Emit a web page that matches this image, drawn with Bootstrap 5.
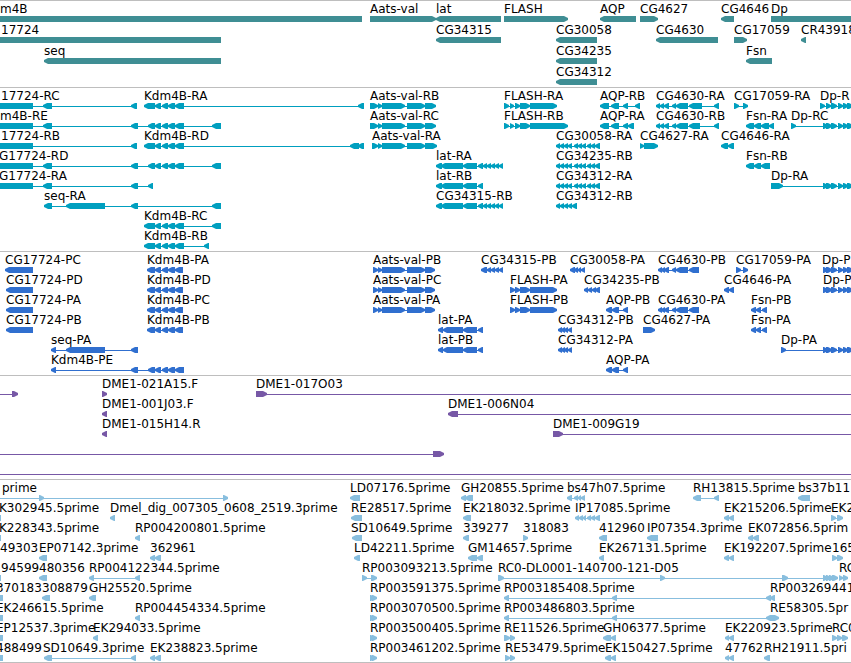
<!DOCTYPE html>
<html lang="en">
<head>
<meta charset="utf-8">
<meta name="viewport" content="width=device-width, initial-scale=1">
<title>Genome region map</title>
<link href="https://cdn.jsdelivr.net/npm/bootstrap@5.3.0/dist/css/bootstrap.min.css" rel="stylesheet">
<style>
  body { font-family: "DejaVu Sans", sans-serif; font-size: 12px; line-height: 14px; color: #000; }
  .gene-track { border-top: 1px solid #bebebe; padding: 1px 0 2px; }
  .gene-track:last-child { border-bottom: 1px solid #bebebe; padding-bottom: 1px; }
  .track-genes { color: #3f8e94; gap: 1px; }
  .track-transcripts { color: #009fbf; }
  .track-proteins { color: #306fcf; }
  .track-clones { color: #7758a6; }
  .track-ests { color: #88bede; }
  .label-line { height: 14px; color: #000; }
  .feature-label { position: absolute; top: 0; white-space: pre; }
  .feature-line { height: 6px; fill: currentColor; }
</style>
</head>
<body class="bg-white">
<main id="map" class="overflow-hidden"></main>
<script src="https://cdn.jsdelivr.net/npm/bootstrap@5.3.0/dist/js/bootstrap.bundle.min.js"></script>
<script>
// Width of the mapped region, in map units.
const SPAN = 851;

// Exon groups shared by several transcripts.
const G = {
  kdm: "144-155 155-161 162-168 168-175 175-184",
  kdmIn: "148-155 155-161 162-168 168-175 175-184",
  kdmP: "147-155 155-161 162-168 168-175 175-183",
  aats: "370-378 378-382 382-405 407-425 425-436",
  aatsP: "373-378 378-382 382-405 407-425 425-435",
  flash: "504-509 510-514 515-520 520-530",
  latEnd: "483-487 487-491 491-495 495-499 499-503",
  lat: "436-442 441-463 463-477 478-483",
  latP: "438-443 443-463 463-477 478-483",
  cg3: "556-560 560-564 564-568 568-572 574-578 578-582 582-586 587-591 591-595 595-600",
  cg46: "656-660 660-664 664-669 672-676 676-688",
  cg46P: "658-662 661-665 664-669 672-676 676-688 689-699",
  dp: "823-828 826-832 831-837 838-843 843-848 847-853 852-858"
};

// Feature: label | label position | direction | exons | optional connector extent
const tracks = [
  ["genes", "Genes", [
    ["m4B|0|<|-20-362", "Aats-val|370|>|370-436", "lat|436|<|436-501", "FLASH|504|>|504-568", "AQP|600|<|600-636", "CG4627|640|>|640-658", "CG4646|721|<|721-734", "Dp|771|>|771-900"],
    ["17724|1|<|-20-221", "CG34315|436|<|436-501", "CG30058|556|<|556-597", "CG4630|656|<|656-718", "CG17059|734|>|734-747", "CR43918|801|<|801-806"],
    ["seq|44|<|44-221", "CG34235|556|<|556-597", "Fsn|746|<|746-772"],
    ["CG34312|556|<|556-597"]
  ]],
  ["transcripts", "Transcripts", [
    ["17724-RC|1|<|-20-33 43-52 131-137", "Kdm4B-RA|144|<|kdm 358-364", "Aats-val-RB|370|>|aats", "FLASH-RA|504|>|flash 530-557", "AQP-RB|600|<|600-609 611-619 623-628 635-640", "CG4630-RA|656|<|cg46 689-702 714-719", "CG17059-RA|734|>|734-739 743-748", "Dp-R|820|>|820-825 826-831 831-837 838-843 843-848 847-853 852-858"],
    ["m4B-RE|0|<|-20-33 43-52 131-138 kdmIn 212-221", "Aats-val-RC|370|>|aats", "FLASH-RB|504|>|flash 530-568", "AQP-RA|600|<|600-609 611-619 623-628 628-634", "CG4630-RB|656|<|cg46 689-700 714-719", "Fsn-RA|746|<|746-754 754-761 761-769 769-774", "Dp-RC|791|>|791-796 dp"],
    ["17724-RB|1|<|-20-33 131-137", "Kdm4B-RD|144|<|kdm 350-359 358-364", "Aats-val-RA|372|>|372-378 378-382 382-405 407-425 425-437", "CG30058-RA|556|<|cg3", "CG4627-RA|640|>|640-644 644-658", "CG4646-RA|721|<|721-728 728-734"],
    ["G17724-RD|-1|<|-20-33 43-52 131-138 kdmIn 212-221", "lat-RA|436|<|lat latEnd", "CG34235-RB|556|<|cg3", "Fsn-RB|746|<|746-754 754-761 761-770"],
    ["G17724-RA|-1|<|-20-33 43-52 131-138 148-153", "lat-RB|436|<|lat", "CG34312-RA|556|<|cg3", "Dp-RA|771|>|771-783 dp"],
    ["seq-RA|44|<|44-52 66-105 131-138 212-221", "CG34315-RB|436|<|lat latEnd", "CG34312-RB|556|<|556-560 560-564 564-568 568-572 572-577"],
    ["Kdm4B-RC|144|<|kdm 212-221"],
    ["Kdm4B-RB|144|<|kdm 204-209"]
  ]],
  ["proteins", "Proteins", [
    ["CG17724-PC|5|<|5-33", "Kdm4B-PA|147|<|kdmP", "Aats-val-PB|373|>|aatsP", "CG34315-PB|481|<|481-487 487-491 491-495 495-499 499-503", "CG30058-PA|570|<|570-575 574-578 578-581 581-585", "CG4630-PB|658|<|cg46P", "CG17059-PA|736|>|736-741 743-748", "Dp-P|822|>|dp"],
    ["CG17724-PD|6|<|6-33", "Kdm4B-PD|147|<|kdmP", "Aats-val-PC|373|>|aatsP", "FLASH-PA|510|>|510-515 515-520 520-530 530-557", "CG34235-PB|584|<|584-588 588-592 592-596 595-600", "CG4646-PA|724|<|724-729 729-734", "Dp-P|823|>|dp"],
    ["CG17724-PA|6|<|6-33", "Kdm4B-PC|147|<|kdmP", "Aats-val-PA|373|>|aatsP", "FLASH-PB|510|>|510-515 515-520 520-530 530-557", "AQP-PB|606|<|606-612 612-619 623-628", "CG4630-PA|658|<|cg46P", "Fsn-PB|751|<|751-756 756-761 762-767"],
    ["CG17724-PB|6|<|6-33", "Kdm4B-PB|147|<|kdmP", "lat-PA|438|<|latP", "CG34312-PB|558|<|558-562 561-565 564-568 568-572", "CG4627-PA|643|>|643-655", "Fsn-PA|751|<|751-756 756-761 762-767"],
    ["seq-PA|51|<|51-56 66-105 131-138", "lat-PB|438|<|latP", "CG34312-PA|558|<|558-562 561-565 564-568 568-572", "Dp-PA|781|>|781-786 dp"],
    ["Kdm4B-PE|51|<|51-56 131-138 kdmIn", "AQP-PA|606|<|606-612 612-619 623-628"]
  ]],
  ["clones", "Clones", [
    ["|0|>|12-18|-5-18", "DME1-021A15.F|102|>|102-107", "DME1-017O03|256|>|256-267|256-860"],
    ["DME1-001J03.F|102|<|102-107", "DME1-006N04|448|<|448-458|448-860"],
    ["DME1-015H14.R|102|<|102-107", "DME1-009G19|553|>|553-563|553-860"],
    ["|0|>|433-444|-5-444"],
    ["|0|>||-5-860"]
  ]],
  ["ests", "ESTs", [
    ["prime|2|>|39-44 223-228|-5-228", "LD07176.5prime|350|<|350-360", "GH20855.5prime|461|<|461-466 465-473", "bs47h07.5prime|567|<|567-572 574-578 578-581 581-585", "RH13815.5prime|693|<|693-701 714-719", "bs37b11|798|<|798-810"],
    ["K302945.5prime|-1|<|-9-1", "Dmel_dig_007305_0608_2519.3prime|110|<|110-115", "RE28517.5prime|351|<|351-362", "EK218032.5prime|463|<|463-471", "IP17085.5prime|575|<|575-579 579-583 583-586 587-591 591-595 595-600", "EK215206.5prime|724|<|724-729 729-734", "EK2|831|>|831-836 837-843"],
    ["K228343.5prime|-1|<|-9-1", "RP004200801.5prime|135|<|135-140", "SD10649.5prime|351|<|352-362", "339277|463|<|463-469", "318083|523|>|523-528", "412960|599|<|599-607", "IP07354.3prime|647|<|647-658", "EK072856.5prim|748|<|748-753 753-759"],
    ["49303|0|<|", "EP07142.3prime|39|<|39-47", "362961|150|<|150-155 155-161", "LD42211.5prime|354|<|354-360", "GM14657.5prime|468|<|468-477 477-483", "EK267131.5prime|599|<|599-604", "EK192207.5prime|724|<|724-729 729-734", "165|832|>|832-837 837-843"],
    ["94599|1|<|-9-1", "480356|39|<|39-47", "RP004122344.5prime|89|<|89-94 135-140", "RP003093213.5prime|362|>|362-367 371-377", "RC0-DL0001-140700-121-D05|498|>|498-504 660-665 782-788 823-828 826-831 829-834 832-838", "RC|839|>|839-843 843-848"],
    ["370183|-4|<|-9-3", "308879|42|<|42-50", "GH25520.5prime|89|<|89-96", "RP003591375.5prime|370|>|370-375 372-377", "RP003185408.5prime|504|<|504-509 612-617 766-771 770-775", "RP003269441|770|<|"],
    ["EK246615.5prime|-4|<|-9-3", "RP004454334.5prime|135|<|135-140", "RP003070500.5prime|370|>|370-375 372-377", "RP003486803.5prime|504|<|504-509 612-617 766-775", "RE58305.5pr|770|>|771-779"],
    ["EP12537.3prime|-4|<|-9-3", "EK294033.5prime|93|<|93-98", "RP003500405.5prime|370|>|370-375 372-377", "RE11526.5prime|504|>|504-510 510-515", "GH06377.5prime|603|<|603-611 611-616", "EK220923.5prime|725|<|725-729 729-734", "RC0|832|>|832-837 837-842 842-848"],
    ["488499|-4|<|-9-3", "SD10649.3prime|43|<|44-52 131-136", "EK238823.5prime|150|<|150-155 155-161", "RP003461202.5prime|370|>|370-375 372-377", "RE53479.5prime|505|>|505-510 510-515", "EK150427.5prime|605|<|605-611 611-616", "47762|725|<|725-729 729-734", "RH21911.5pri|764|<|764-770"]
  ]]
];

const range = s => s.match(/^(-?\d+)-(\d+)$/).slice(1).map(Number);

// Blunt-tipped arrow: two units high at the tip, six at the body.
function exonShape([a, b], dir) {
  const head = Math.min(4, b - a);
  const pts = dir === "<"
    ? [[a, 2], [a + head, 0], [b, 0], [b, 6], [a + head, 6], [a, 4]]
    : [[a, 0], [b - head, 0], [b, 2], [b, 4], [b - head, 6], [a, 6]];
  return `<polygon points="${pts.map(p => p.join()).join(" ")}"/>`;
}

function renderRow(row) {
  let labels = "", shapes = "";
  for (const item of row) {
    const [name, x, dir, list, extent] = item.split("|");
    const exons = list.split(" ").filter(Boolean)
      .flatMap(t => (G[t] || t).split(" ")).map(range);
    if (name) labels += `<span class="feature-label" style="left:${x / SPAN * 100}%">${name}</span>`;
    const line = extent ? range(extent)
      : exons.length > 1 ? [exons[0][0], exons[exons.length - 1][1]] : null;
    if (line) shapes += `<rect x="${line[0]}" y="3" width="${line[1] - line[0]}" height="1"/>`;
    shapes += exons.map(e => exonShape(e, dir)).join("");
  }
  return `<div class="d-flex flex-column">
    <div class="label-line position-relative">${labels}</div>
    <svg class="feature-line d-block w-100" viewBox="0 0 ${SPAN} 6" preserveAspectRatio="none" aria-hidden="true">${shapes}</svg>
  </div>`;
}

document.getElementById("map").innerHTML = tracks.map(([kind, title, rows]) =>
  `<section class="gene-track track-${kind} d-flex flex-column" aria-label="${title}">${rows.map(renderRow).join("")}</section>`
).join("");
</script>
</body>
</html>
